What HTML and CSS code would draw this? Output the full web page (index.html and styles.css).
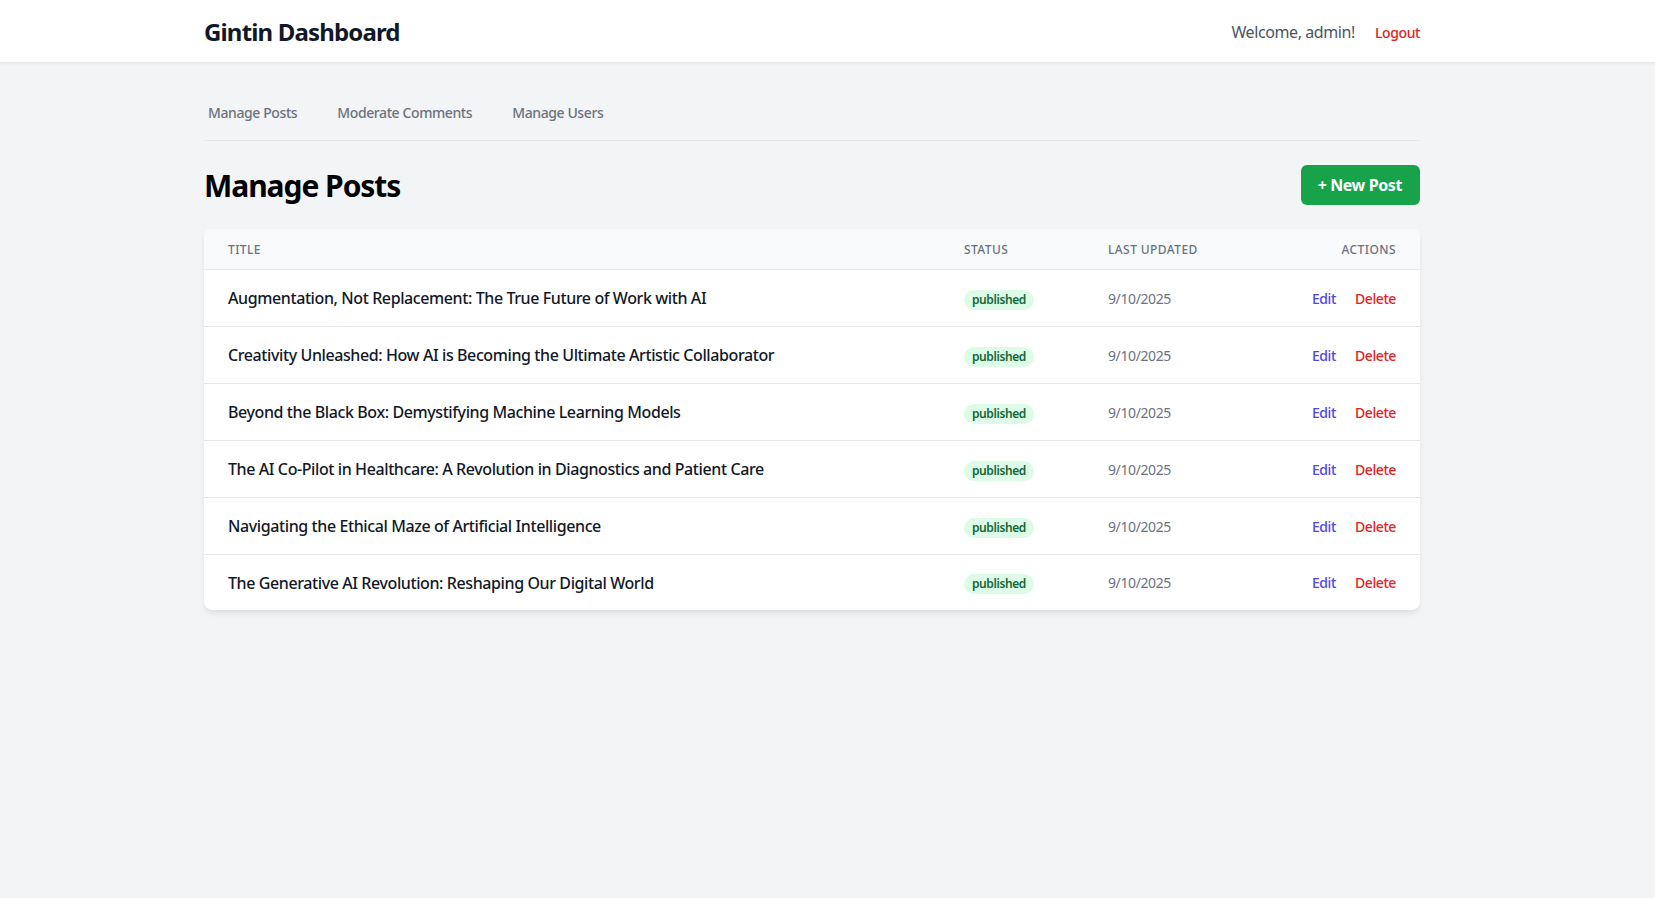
FILE: index.html
```html
<!DOCTYPE html>
<html lang="en">
<head>
<meta charset="utf-8">
<title>Gintin Dashboard</title>
<link rel="stylesheet" href="styles.css">
</head>
<body>
<header class="topbar">
  <div class="wrap">
    <div class="container topbar-inner">
      <div class="brand">Gintin Dashboard</div>
      <div class="user">
        <span class="welcome">Welcome, admin!</span>
        <a class="logout" href="#">Logout</a>
      </div>
    </div>
  </div>
</header>
<main class="wrap">
  <div class="container">
    <nav class="tabs">
      <a href="#" class="tab">Manage Posts</a>
      <a href="#" class="tab">Moderate Comments</a>
      <a href="#" class="tab">Manage Users</a>
    </nav>
    <div class="page-head">
      <h1 class="page-title">Manage Posts</h1>
      <button class="btn-new">+ New Post</button>
    </div>
    <div class="card">
      <table class="posts">
        <colgroup>
          <col>
          <col class="c-status">
          <col class="c-date">
          <col class="c-actions">
        </colgroup>
        <thead>
          <tr>
            <th>Title</th>
            <th>Status</th>
            <th>Last Updated</th>
            <th class="right">Actions</th>
          </tr>
        </thead>
        <tbody>
          <tr>
            <td class="title">Augmentation, Not Replacement: The True Future of Work with AI</td>
            <td><span class="badge">published</span></td>
            <td class="date">9/10/2025</td>
            <td class="right actions"><a href="#" class="edit">Edit</a><a href="#" class="delete">Delete</a></td>
          </tr>
          <tr>
            <td class="title">Creativity Unleashed: How AI is Becoming the Ultimate Artistic Collaborator</td>
            <td><span class="badge">published</span></td>
            <td class="date">9/10/2025</td>
            <td class="right actions"><a href="#" class="edit">Edit</a><a href="#" class="delete">Delete</a></td>
          </tr>
          <tr>
            <td class="title">Beyond the Black Box: Demystifying Machine Learning Models</td>
            <td><span class="badge">published</span></td>
            <td class="date">9/10/2025</td>
            <td class="right actions"><a href="#" class="edit">Edit</a><a href="#" class="delete">Delete</a></td>
          </tr>
          <tr>
            <td class="title">The AI Co-Pilot in Healthcare: A Revolution in Diagnostics and Patient Care</td>
            <td><span class="badge">published</span></td>
            <td class="date">9/10/2025</td>
            <td class="right actions"><a href="#" class="edit">Edit</a><a href="#" class="delete">Delete</a></td>
          </tr>
          <tr>
            <td class="title">Navigating the Ethical Maze of Artificial Intelligence</td>
            <td><span class="badge">published</span></td>
            <td class="date">9/10/2025</td>
            <td class="right actions"><a href="#" class="edit">Edit</a><a href="#" class="delete">Delete</a></td>
          </tr>
          <tr>
            <td class="title">The Generative AI Revolution: Reshaping Our Digital World</td>
            <td><span class="badge">published</span></td>
            <td class="date">9/10/2025</td>
            <td class="right actions"><a href="#" class="edit">Edit</a><a href="#" class="delete">Delete</a></td>
          </tr>
        </tbody>
      </table>
    </div>
  </div>
</main>
</body>
</html>
```
FILE: styles.css
```css
* { box-sizing: border-box; }
html, body { margin: 0; padding: 0; }
body {
  background: #f3f4f6;
  font-family: "Noto Sans", "Open Sans", sans-serif;
  letter-spacing: -0.025em;
  color: #111827;
  min-height: 898px;
}
a { text-decoration: none; }

.wrap { padding-right: 31px; }
.container { width: 1216px; margin: 0 auto; }

.topbar {
  background: #fff;
  height: 63px;
  border-bottom: 1px solid #e5e7eb;
  box-shadow: 0 1px 2px rgba(0,0,0,0.04);
}
.topbar-inner {
  height: 62px;
  padding-top: 2px;
  display: flex;
  align-items: center;
  justify-content: space-between;
}
.brand {
  font-size: 24px;
  font-weight: 700;
  color: #111827;
  line-height: 32px;
  letter-spacing: -0.035em;
}
.user { display: flex; align-items: center; gap: 20px; }
.welcome { font-size: 16px; color: #4b5563; }
.logout { font-size: 14px; font-weight: 500; color: #dc2626; }

.tabs {
  display: flex;
  gap: 32px;
  margin-top: 32px;
  border-bottom: 1px solid #e5e7eb;
  height: 46px;
}
.tab {
  padding: 8px 4px 0;
  font-size: 14px;
  font-weight: 500;
  color: #6b7280;
  line-height: 20px;
}

.page-head {
  display: flex;
  align-items: center;
  justify-content: space-between;
  margin-top: 24px;
  height: 40px;
}
.page-title {
  margin: 0;
  font-size: 30px;
  font-weight: 700;
  color: #000;
  line-height: 36px;
  letter-spacing: -0.035em;
  position: relative;
  top: 1px;
}
.btn-new {
  background: #16a34a;
  color: #fff;
  border: 0;
  border-radius: 6px;
  height: 40px;
  padding: 0 18px 0 17px;
  font-family: inherit;
  letter-spacing: -0.025em;
  font-size: 16px;
  font-weight: 700;
}

.card {
  margin-top: 24px;
  background: #fff;
  border-radius: 8px;
  box-shadow: 0 4px 6px -1px rgba(0,0,0,0.08), 0 2px 4px -2px rgba(0,0,0,0.06);
  overflow: hidden;
}
.posts {
  width: 100%;
  border-collapse: collapse;
  table-layout: fixed;
}
.c-status { width: 144px; }
.c-date { width: 203px; }
.c-actions { width: 133px; }
.posts thead { background: #f9fafb; }
.posts th {
  text-align: left;
  font-size: 12px;
  font-weight: 500;
  color: #6b7280;
  text-transform: uppercase;
  letter-spacing: 0.035em;
  padding: 2px 24px 0;
  height: 40px;
  border-bottom: 1px solid #e5e7eb;
}
.posts td {
  padding: 1px 24px 0;
  height: 57px;
  border-bottom: 1px solid #e5e7eb;
  white-space: nowrap;
}
.posts tbody tr:last-child td { border-bottom: 0; height: 56px; }
.posts .right { text-align: right; }
.title { font-size: 16px; font-weight: 500; color: #111827; }
.badge {
  display: inline-block;
  background: #dcfce7;
  color: #166534;
  font-size: 12px;
  font-weight: 600;
  line-height: 20px;
  padding: 0 8px;
  border-radius: 9999px;
}
.date { font-size: 14px; color: #6b7280; }
.actions { font-size: 14px; font-weight: 500; }
.edit { color: #4f46e5; }
.delete { color: #dc2626; margin-left: 19px; }
```
